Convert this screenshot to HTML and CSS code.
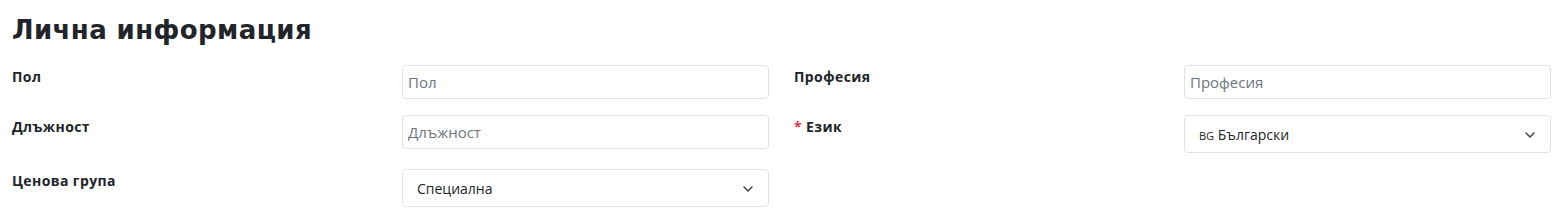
FILE: index.html
```html
<!DOCTYPE html>
<html lang="bg">
<head>
    <meta charset="UTF-8">
    <meta name="viewport" content="width=device-width, initial-scale=1.0">
    <title>Лична информация</title>
    <link rel="stylesheet" href="styles.css">
</head>
<body>
    <h2 class="section-title">Лична информация</h2>

    <div class="form-row">
        <div class="field">
            <label class="field-label" for="gender">Пол</label>
            <input class="form-input" id="gender" type="text" placeholder="Пол">
        </div>
        <div class="field">
            <label class="field-label" for="profession">Професия</label>
            <input class="form-input" id="profession" type="text" placeholder="Професия">
        </div>
    </div>

    <div class="form-row">
        <div class="field">
            <label class="field-label" for="position">Длъжност</label>
            <input class="form-input" id="position" type="text" placeholder="Длъжност">
        </div>
        <div class="field">
            <label class="field-label" for="language"><span class="required">*</span> Език</label>
            <div class="form-select" id="language">
                <span><span class="flag">bg</span> Български</span>
                <svg class="chevron" width="10" height="6" viewBox="0 0 10 6"><path d="M1 1l4 4 4-4" fill="none" stroke="#444" stroke-width="1.5" stroke-linecap="round" stroke-linejoin="round"/></svg>
            </div>
        </div>
    </div>

    <div class="form-row">
        <div class="field">
            <label class="field-label" for="price-group">Ценова група</label>
            <div class="form-select" id="price-group">
                <span>Специална</span>
                <svg class="chevron" width="10" height="6" viewBox="0 0 10 6"><path d="M1 1l4 4 4-4" fill="none" stroke="#444" stroke-width="1.5" stroke-linecap="round" stroke-linejoin="round"/></svg>
            </div>
        </div>
        <div class="field"></div>
    </div>
</body>
</html>
```

FILE: styles.css
```css
body {
    font-family: 'Open Sans', 'Noto Sans', sans-serif;
    font-size: 14px;
    margin: 0;
    padding: 0 9px 0 12px;
    background-color: #fff;
    color: #212529;
}

.section-title {
    font-family: 'DejaVu Sans', sans-serif;
    font-weight: 700;
    font-size: 26px;
    line-height: 30px;
    letter-spacing: 0.4px;
    margin: 15px 0 20px;
    color: #212529;
}

.form-row {
    display: grid;
    grid-template-columns: 1fr 1fr;
    column-gap: 25px;
    align-items: start;
    margin-bottom: 16px;
}

.field {
    display: grid;
    grid-template-columns: 390px 1fr;
    align-items: start;
}

.field-label {
    font-weight: 700;
    line-height: 20px;
    letter-spacing: 0.4px;
    padding-top: 2px;
}

.required {
    color: #dc3545;
}

.form-input {
    box-sizing: border-box;
    height: 34px;
    width: 100%;
    padding: 0 5px;
    border: 1px solid #dee2e6;
    border-radius: 4px;
    font-family: inherit;
    font-size: 15px;
    color: #212529;
}

.form-input::placeholder {
    color: #6c757d;
}

.form-select {
    box-sizing: border-box;
    height: 38px;
    display: flex;
    align-items: center;
    justify-content: space-between;
    padding: 0 15px 0 14px;
    border: 1px solid #dee2e6;
    border-radius: 4px;
}

.flag {
    font-size: 16px;
    font-variant: small-caps;
}

.chevron {
    margin-top: 1px;
}
```
